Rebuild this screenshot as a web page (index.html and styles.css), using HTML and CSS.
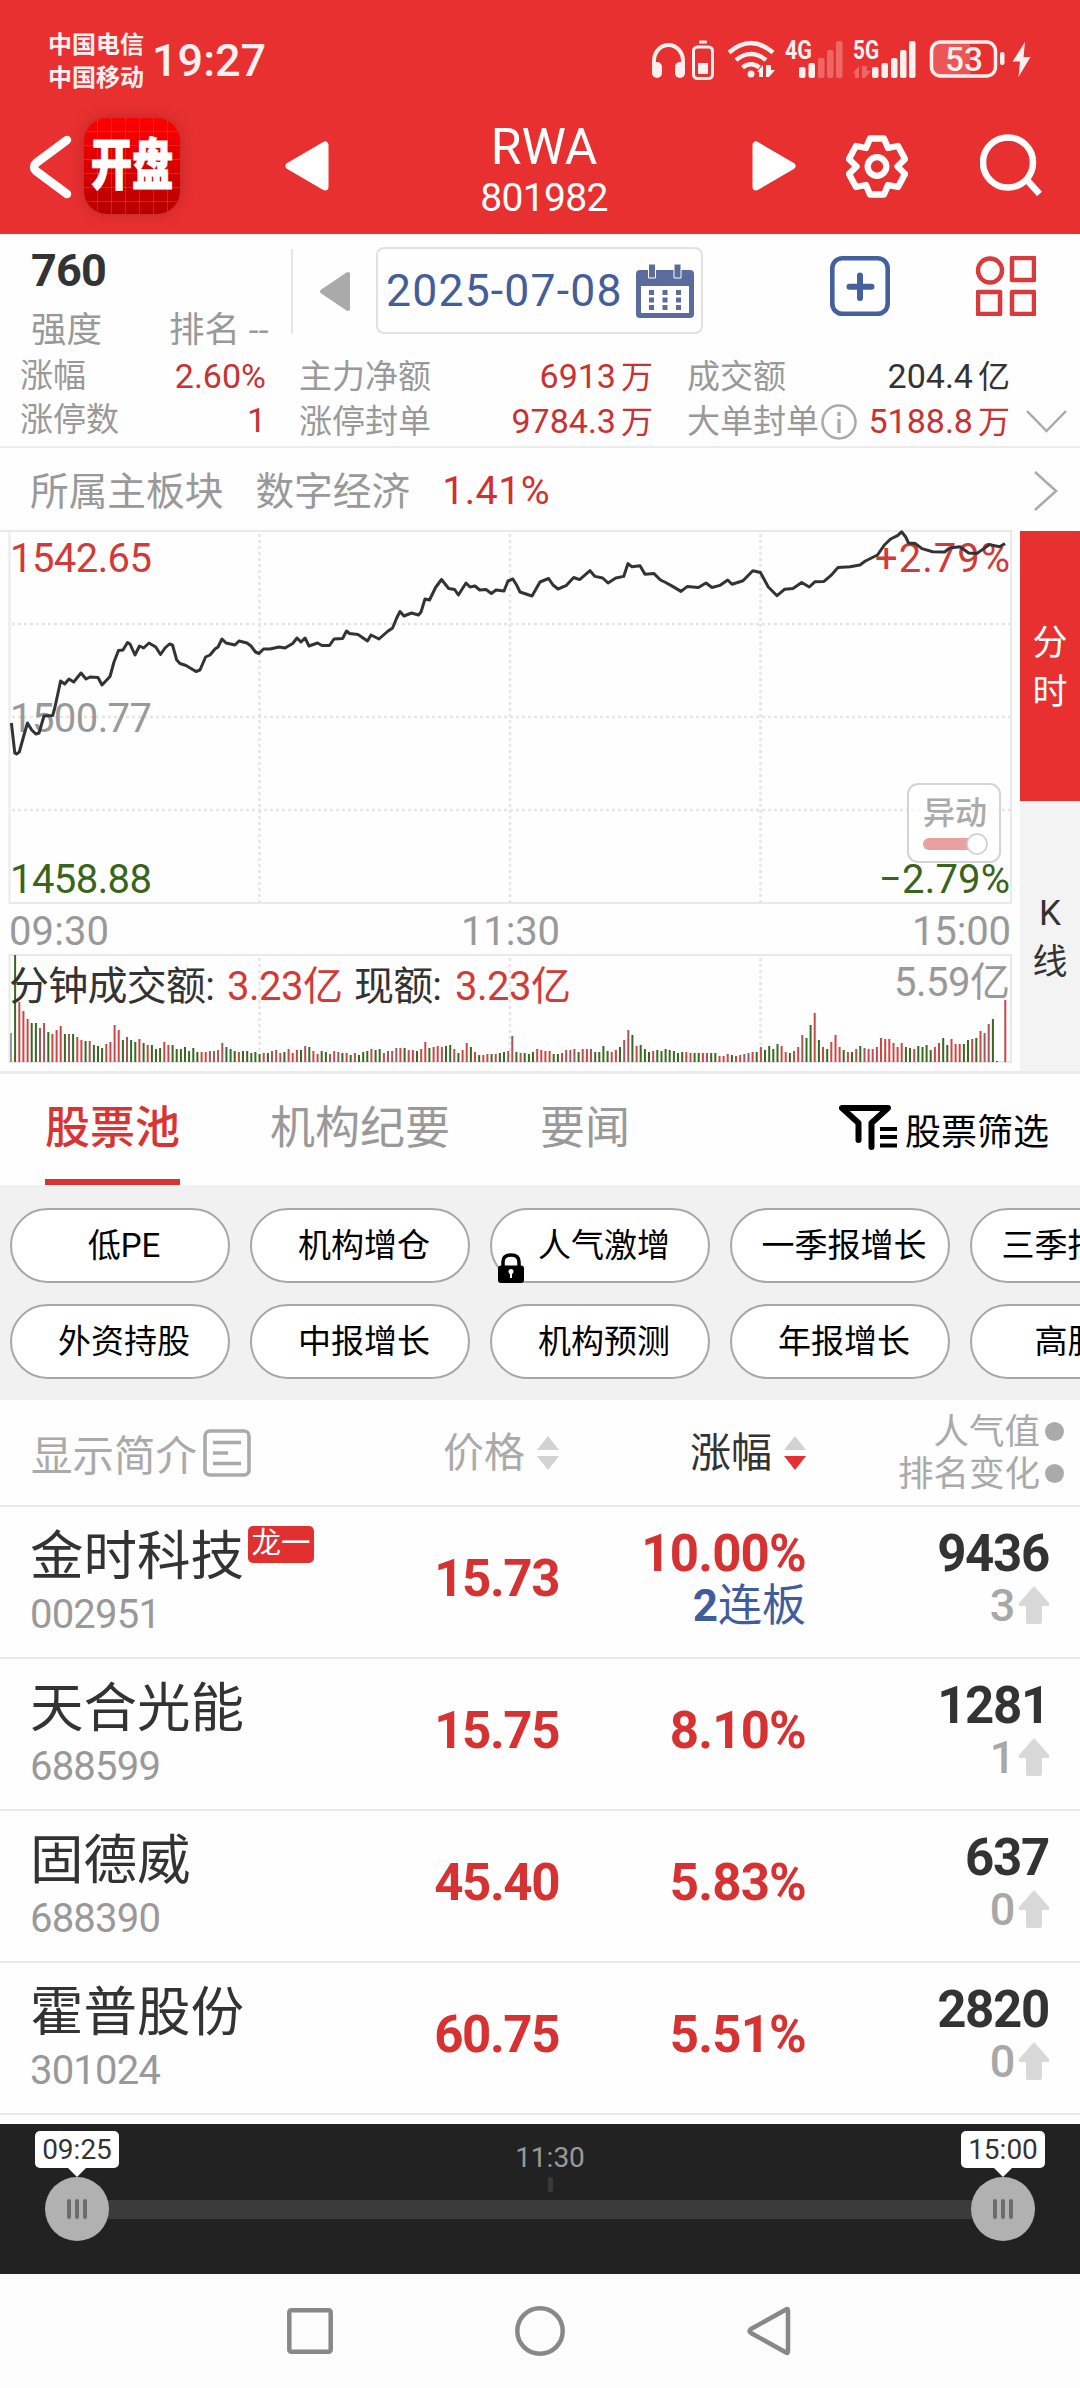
FILE: index.html
```html
<!DOCTYPE html>
<html lang="zh-CN">
<head>
    <meta charset="UTF-8">
    <meta name="viewport" content="width=device-width, initial-scale=1.0">
    <title>RWA 801982</title>
    <link rel="stylesheet" href="styles.css">
</head>
<body>

    <header class="header">
        <div class="status-bar">
            <div class="carrier">
                <span>中国电信</span>
                <span>中国移动</span>
            </div>
            <span class="clock">19:27</span>
            <svg class="status-icons" width="390" height="44" viewBox="0 0 390 44">
                <!-- headphones -->
                <path d="M4 28V23a14.500 16 0 0 1 29 0v5" fill="none" stroke="#fff0f0" stroke-width="4"/>
                <rect x="2" y="24" width="10" height="16" rx="5"/>
                <rect x="25" y="24" width="10" height="16" rx="5"/>
                <rect x="49" y="2.500" width="8" height="3" rx="1"/>
                <rect x="43.500" y="9" width="19" height="31.500" rx="4" fill="none" stroke="#fff0f0" stroke-width="3"/>
                <rect x="48" y="25" width="10" height="11"/>
                <!-- wifi -->
                <g fill="none" stroke="#fff0f0" stroke-width="4.500">
                    <path d="M79 14.500q22-19 44 0"/>
                    <path d="M86 22q15-12 30 0"/>
                    <path d="M92.500 29.500q8.500-6.500 17 0"/>
                </g>
                <circle cx="101" cy="36" r="3.500"/>
                <path d="M107 34l6-7v12h-4v-5zM116 27v12h3l6-7h-4v-5z"/>
                <!-- signals -->
                <text x="135" y="21" class="net" textLength="27" lengthAdjust="spacingAndGlyphs">4G</text>
                <rect x="149" y="29" width="6.500" height="11" rx="2"/>
                <rect x="158.500" y="25" width="6.500" height="15" rx="2"/>
                <g opacity=".28">
                    <rect x="168" y="20" width="6.500" height="20" rx="2"/>
                    <rect x="177" y="12" width="6.500" height="28" rx="2"/>
                    <rect x="186" y="3" width="6.500" height="37" rx="2"/>
                    <path d="M203 35l6-7v12h-4v-5zM212 28v12h3l6-7h-4v-5z"/>
                </g>
                <text x="203" y="21" class="net" textLength="26" lengthAdjust="spacingAndGlyphs">5G</text>
                <rect x="222" y="29" width="6.500" height="11" rx="2"/>
                <rect x="231.500" y="25" width="6.500" height="15" rx="2"/>
                <rect x="241" y="20" width="6.500" height="20" rx="2"/>
                <rect x="250" y="12" width="6.500" height="28" rx="2"/>
                <rect x="259" y="3" width="6.500" height="37" rx="2"/>
                <!-- battery -->
                <path d="M290 4h30v34h-30q-8 0-8-8v-18q0-8 8-8z" opacity=".2"/>
                <rect x="281.500" y="4" width="64" height="34" rx="9" fill="none" stroke="#fff0f0" stroke-width="3.500"/>
                <rect x="350" y="14" width="4.500" height="13" rx="2"/>
                <text x="295" y="33" class="level" textLength="38" lengthAdjust="spacingAndGlyphs">53</text>
                <path d="M375 4l-12.500 19.500h7.500l-1.500 15.500 12-20h-7z"/>
            </svg>
        </div>

        <div class="nav">
            <svg class="back" width="44" height="66" viewBox="0 0 44 66"><path d="M38 6L7 29q-4 4 0 8L38 60" fill="none" stroke="#fff" stroke-width="8.500" stroke-linecap="round"/></svg>
            <div class="logo"><span>开盘</span></div>
            <svg class="prev" width="44" height="50" viewBox="0 0 44 50"><path d="M40 4v42L4 25z" fill="#fff" stroke="#fff" stroke-width="7" stroke-linejoin="round"/></svg>
            <div class="title">
                <h1>RWA</h1>
                <p>801982</p>
            </div>
            <svg class="next" width="44" height="50" viewBox="0 0 44 50"><path d="M4 4v42l36-21z" fill="#fff" stroke="#fff" stroke-width="7" stroke-linejoin="round"/></svg>
            <svg class="gear" width="62" height="63" viewBox="0 0 62 63" fill="none" stroke="#fff" stroke-width="6.300" stroke-linejoin="round">
                <path d="M24 3.500h14l4 9.500 10-2 7 13-7.500 7.500L59 39l-7 13-10-2-4 9.500H24L20 50l-10 2-7-13 7.500-7.500L3 24l7-13 10 2z"/>
                <circle cx="31" cy="31.500" r="9.300"/>
            </svg>
            <svg class="search" width="62" height="62" viewBox="0 0 62 62" fill="none" stroke="#fff" stroke-width="6.500">
                <circle cx="28" cy="28.500" r="25"/>
                <path d="M47 46l12.500 14"/>
            </svg>
        </div>
    </header>

    <section class="summary">
        <div class="strength">
            <b>760</b>
            <p><span>强度</span><span>排名 --</span></p>
        </div>
        <svg class="day-prev" width="31" height="41" viewBox="0 0 31 41"><path d="M29 3v35L3 20.500z" fill="#aaa" stroke="#aaa" stroke-width="4" stroke-linejoin="round"/></svg>
        <div class="date">
            <span>2025-07-08</span>
            <svg width="58" height="55" viewBox="0 0 58 55" fill="#5a6c9c">
                <path fill-rule="evenodd" d="M4 6h50q4 0 4 4v40q0 4-4 4H4q-4 0-4-4V10q0-4 4-4zM5 22v27h48V22z"/>
                <path d="M12.500 0h7v14h-7zM38 0h7v14h-7z" stroke="#fff" stroke-width="1"/>
                <path d="M13 26h5v5h-5zM26.500 26h5v5h-5zM40 26h5v5h-5zM13 33.500h5v5h-5zM26.500 33.500h5v5h-5zM40 33.500h5v5h-5zM13 41h5v5h-5zM26.500 41h5v5h-5zM40 41h5v5h-5z"/>
            </svg>
        </div>
        <svg class="add" width="60" height="60" viewBox="0 0 60 60" fill="none" stroke="#44619d">
            <rect x="2.300" y="2.300" width="55.400" height="55.400" rx="10" stroke-width="4.600"/>
            <path d="M30 19.500v22.500M19.500 30.700h22" stroke-width="6" stroke-linecap="round"/>
        </svg>
        <svg class="apps" width="60" height="60" viewBox="0 0 60 60" fill="none" stroke="#d73b3b" stroke-width="4.500" stroke-linejoin="round">
            <circle cx="14" cy="14.500" r="12"/>
            <rect x="36" y="2" width="22" height="22"/>
            <rect x="2" y="36" width="22" height="22"/>
            <rect x="36" y="36" width="22" height="22"/>
        </svg>
    </section>

    <section class="stats">
        <dl class="stats-a">
            <div><dt>涨幅</dt><dd>2.60%</dd></div>
            <div><dt>涨停数</dt><dd>1</dd></div>
        </dl>
        <dl class="stats-b">
            <div><dt>主力净额</dt><dd>6913<i>万</i></dd></div>
            <div><dt>涨停封单</dt><dd>9784.3<i>万</i></dd></div>
        </dl>
        <dl class="stats-c">
            <div><dt>成交额</dt><dd class="dark">204.4<i>亿</i></dd></div>
            <div>
                <dt>大单封单<svg width="38" height="38" viewBox="0 0 38 38" fill="none" stroke="#aaa" stroke-width="2.500"><circle cx="19" cy="19" r="16.500"/><path d="M19 16v14M19 9v4" stroke-width="3.300"/></svg></dt>
                <dd>5188.8<i>万</i></dd>
            </div>
        </dl>
        <svg class="more" width="41" height="24" viewBox="0 0 41 24"><path d="M1 1l19.500 20L40 1" fill="none" stroke="#aaa" stroke-width="2.500"/></svg>
    </section>

    <section class="board">
        <span>所属主板块</span>
        <span>数字经济</span>
        <em>1.41%</em>
        <svg width="24" height="40" viewBox="0 0 24 40"><path d="M1 1l21 19L1 39" fill="none" stroke="#aaa" stroke-width="2.500"/></svg>
    </section>

    <section class="chart">
        <div class="plot">
            <svg width="1020" height="541" viewBox="0 0 1020 541">
                <g class="frame">
                    <path d="M0 0H1011"/>
                    <rect x="9.500" y="0" width="1001.500" height="372"/>
                    <rect x="9.500" y="424" width="1001.500" height="107"/>
                </g>
                <g class="grid">
                    <path d="M12 93H1011M12 186H1011M12 279H1011"/>
                    <path d="M259.500 3V372M510 3V372M760.500 3V372M259.500 427V531M510 427V531M760.500 427V531"/>
                </g>
                <g class="labels">
                    <text x="10" y="41" class="up" textLength="142">1542.65</text>
                    <text x="10" y="201" class="mid" textLength="142">1500.77</text>
                    <text x="10" y="362" class="down" textLength="142">1458.88</text>
                    <text x="875" y="41" class="up" textLength="135">+2.79%</text>
                    <text x="879" y="362" class="down" textLength="131">−2.79%</text>
                    <text x="9" y="414" class="mid" textLength="100">09:30</text>
                    <text x="461" y="414" class="mid" textLength="99">11:30</text>
                    <text x="912" y="414" class="mid" textLength="99">15:00</text>
                    <text x="894" y="465" class="mid" textLength="116">5.59亿</text>
                </g>
                <g id="volume"></g>
                <g class="labels">
                    <text x="9" y="469" class="dark" textLength="206">分钟成交额:</text>
                    <text x="227" y="469" class="up" textLength="116">3.23亿</text>
                    <text x="354" y="469" class="dark" textLength="88">现额:</text>
                    <text x="455" y="469" class="up" textLength="116">3.23亿</text>
                </g>
                <polyline id="price" points=""/>
            </svg>
            <div class="switch">
                异动
                <svg width="66" height="22" viewBox="0 0 66 22">
                    <rect x="0" y="5" width="58" height="12" rx="6" fill="#e9a0a0"/>
                    <circle cx="54" cy="11" r="10" fill="#fff" stroke="#ccc" stroke-width="1.500"/>
                </svg>
            </div>
        </div>
        <div class="modes">
            <div class="mode active"><span>分</span><span>时</span></div>
            <div class="mode"><span>K</span><span>线</span></div>
        </div>
    </section>

    <nav class="tabs">
        <a class="tab active">股票池</a>
        <a class="tab">机构纪要</a>
        <a class="tab">要闻</a>
        <a class="screener">
            <svg width="58" height="46" viewBox="0 0 58 46" fill="none" stroke="#000">
                <path d="M19.500 35V18L3 3h46L32.500 18v24" stroke-width="6" stroke-linecap="round" stroke-linejoin="round"/>
                <path d="M41 24h17M41 32h17M41 40.500h17" stroke-width="4"/>
            </svg>
            股票筛选
        </a>
    </nav>

    <section class="filters">
        <span class="pill">低PE</span>
        <span class="pill">机构增仓</span>
        <span class="pill">人气激增
            <svg class="lock" width="26" height="30" viewBox="0 0 26 30">
                <path d="M5 14V9q0-7 8-7t8 7v5" fill="none" stroke="#000" stroke-width="3.500"/>
                <rect y="12.500" width="26" height="17.500" rx="3"/>
                <path d="M13 17v8" stroke="#fff" stroke-width="2"/>
                <circle cx="13" cy="18.500" r="2.500" fill="#fff"/>
            </svg>
        </span>
        <span class="pill">一季报增长</span>
        <span class="pill">三季报增长</span>
        <span class="pill">外资持股</span>
        <span class="pill">中报增长</span>
        <span class="pill">机构预测</span>
        <span class="pill">年报增长</span>
        <span class="pill">高股息</span>
    </section>

    <section class="stocks">
        <div class="row head">
            <div class="intro">显示简介
                <svg width="48" height="48" viewBox="0 0 48 48" fill="none" stroke="#aaa">
                    <rect x="2" y="2" width="44" height="44" rx="5" stroke-width="3.600"/>
                    <path d="M10 13.500h28M10 24h15M10 34.500h28" stroke-width="3.400"/>
                </svg>
            </div>
            <div class="price">价格<svg width="22" height="34" viewBox="0 0 22 34" fill="#d2d2d2"><path d="M11 0l11 14H0zM0 20h22L11 34z"/></svg></div>
            <div class="change">涨幅<svg width="22" height="34" viewBox="0 0 22 34"><path d="M11 0l11 14H0z" fill="#d2d2d2"/><path d="M0 20h22L11 34z" fill="#e83030"/></svg></div>
            <div class="hot">
                <p>人气值<i></i></p>
                <p>排名变化<i></i></p>
            </div>
        </div>
        <div class="row">
            <div class="name"><h2>金时科技<sup>龙一</sup></h2><p>002951</p></div>
            <div class="price">15.73</div>
            <div class="change">10.00%<small><b>2</b>连板</small></div>
            <div class="hot">9436<small>3<svg width="30" height="38" viewBox="0 0 30 38"><path d="M15 0l15 17v3h-7v16q0 2-2 2H9q-2 0-2-2V20H0v-3z"/></svg></small></div>
        </div>
        <div class="row">
            <div class="name"><h2>天合光能</h2><p>688599</p></div>
            <div class="price">15.75</div>
            <div class="change">8.10%</div>
            <div class="hot">1281<small>1<svg width="30" height="38" viewBox="0 0 30 38"><path d="M15 0l15 17v3h-7v16q0 2-2 2H9q-2 0-2-2V20H0v-3z"/></svg></small></div>
        </div>
        <div class="row">
            <div class="name"><h2>固德威</h2><p>688390</p></div>
            <div class="price">45.40</div>
            <div class="change">5.83%</div>
            <div class="hot">637<small>0<svg width="30" height="38" viewBox="0 0 30 38"><path d="M15 0l15 17v3h-7v16q0 2-2 2H9q-2 0-2-2V20H0v-3z"/></svg></small></div>
        </div>
        <div class="row">
            <div class="name"><h2>霍普股份</h2><p>301024</p></div>
            <div class="price">60.75</div>
            <div class="change">5.51%</div>
            <div class="hot">2820<small>0<svg width="30" height="38" viewBox="0 0 30 38"><path d="M15 0l15 17v3h-7v16q0 2-2 2H9q-2 0-2-2V20H0v-3z"/></svg></small></div>
        </div>
    </section>

    <section class="timeline">
        <div class="handle">
            <span class="tip">09:25</span>
            <span class="knob"><i></i><i></i><i></i></span>
        </div>
        <div class="track">
            <span class="noon">11:30</span>
            <span class="tick"></span>
            <span class="bar"></span>
        </div>
        <div class="handle">
            <span class="tip">15:00</span>
            <span class="knob"><i></i><i></i><i></i></span>
        </div>
    </section>

    <footer class="system-nav">
        <svg width="46" height="46" viewBox="0 0 46 46"><rect x="2.300" y="2.300" width="41.400" height="41.400" rx="2"/></svg>
        <svg width="50" height="50" viewBox="0 0 50 50"><circle cx="25" cy="25" r="22.700"/></svg>
        <svg width="44" height="50" viewBox="0 0 44 50"><path d="M39 3.500Q41 2 41 5v40q0 3-2 1.500L4 27q-3-2 0-4z"/></svg>
    </footer>

    <script src="script.js"></script>
</body>
</html>
```

FILE: styles.css
```css
* {
    box-sizing: border-box;
}

body {
    margin: 0;
    width: 1080px;
    height: 2388px;
    overflow: hidden;
    background-color: #fefefe;
    color: #333;
    font-family: Roboto, "Noto Sans CJK SC", sans-serif;
}

h1, h2, p, dl, dd {
    margin: 0;
    font-weight: 400;
}

i, em {
    font-style: normal;
}

svg {
    display: block;
    flex: none;
}

/* header */
.header {
    height: 234px;
    background-color: #e83030;
    color: #fff;
}

.status-bar {
    display: flex;
    height: 100px;
    padding: 29px 0 0 48px;
    color: #fff0f0;
}

.carrier {
    display: flex;
    flex-direction: column;
    width: 104px;
    font-size: 24px;
    font-weight: 700;
    line-height: 33px;
}

.clock {
    width: 448px;
    font-size: 45px;
    font-weight: 500;
    line-height: 63px;
}

.status-icons {
    margin: 9px 0 0 50px;
    overflow: visible;
    fill: #fff0f0;
}

.net {
    font-size: 26px;
    font-weight: 700;
}

.level {
    font-size: 34px;
    font-weight: 500;
}

.nav {
    display: flex;
    align-items: flex-start;
    height: 134px;
}

.back {
    margin: 34px 11px 0 29px;
}

.logo {
    width: 96px;
    height: 96px;
    margin-top: 18px;
    border-radius: 23px;
    background-image:
        repeating-linear-gradient(90deg, transparent 0 13px, rgba(255, 90, 90, 0.35) 13px 14px),
        repeating-linear-gradient(transparent 0 13px, rgba(255, 90, 90, 0.35) 13px 14px),
        linear-gradient(#ff0000, #b60000);
    box-shadow: 0 0 14px rgba(120, 30, 30, 0.4);
    display: flex;
    align-items: center;
    justify-content: center;
}

.logo span {
    font-size: 51px;
    font-weight: 900;
    line-height: 96px;
    white-space: nowrap;
    -webkit-text-stroke: 1px #fff;
    transform: scale(0.81, 1.08);
}

.prev {
    margin: 41px 0 0 105px;
}

.title {
    width: 423px;
    padding: 17px 0 0 7px;
    text-align: center;
}

.title h1 {
    font-size: 50px;
    line-height: 60px;
}

.title p {
    font-size: 39px;
    line-height: 42px;
    letter-spacing: -0.700px;
}

.next {
    margin-top: 41px;
}

.gear {
    margin: 35px 0 0 50px;
}

.search {
    margin: 34px 0 0 72px;
}

/* summary */
.summary {
    display: flex;
    align-items: flex-start;
    height: 123px;
    padding: 13px 0 0 31px;
}

.strength {
    width: 262px;
    height: 85px;
    margin-top: 2px;
    border-right: 2px solid #e6e6e6;
}

.strength b {
    display: block;
    height: 57px;
    font-size: 45px;
    line-height: 43px;
    letter-spacing: -0.800px;
}

.strength p {
    display: flex;
    gap: 67px;
    font-size: 35.500px;
    line-height: 48px;
    color: #999;
}

.day-prev {
    margin: 24px 0 0 26px;
}

.date {
    display: flex;
    justify-content: space-between;
    align-items: center;
    width: 327px;
    height: 87px;
    margin-left: 26px;
    padding: 1px 7px 0 8px;
    border: 2px solid #e1e1e1;
    border-radius: 8px;
    color: #435e98;
    font-size: 44.500px;
    letter-spacing: 1.200px;
}

.add {
    margin: 9px 0 0 127px;
}

.apps {
    margin: 9px 0 0 86px;
}

.stats {
    display: flex;
    height: 91px;
    padding-left: 20px;
    border-bottom: 2px solid #ececec;
    font-size: 33px;
    line-height: 44px;
}

.stats dl {
    margin-top: -3px;
}

.stats .stats-a {
    width: 246px;
}

.stats .stats-b {
    width: 354px;
    margin-left: 33px;
}

.stats .stats-c {
    width: 323px;
    margin-left: 34px;
}

.stats dl div {
    display: flex;
    justify-content: space-between;
    white-space: nowrap;
}

.stats dt {
    display: flex;
    align-items: center;
    gap: 1px;
    color: #999;
}

.stats dd {
    font-size: 34px;
    color: #c93232;
}

.stats dd i {
    margin-left: 5px;
    font-size: 32px;
}

.stats dd.dark {
    color: #333;
}

.more {
    margin: 53px 0 0 16px;
}

.board {
    display: flex;
    align-items: center;
    height: 83px;
    padding: 2px 22px 0 30px;
    font-size: 38.700px;
    color: #999;
}

.board span {
    margin: -5px 32px 0 0;
}

.board em {
    flex: 1;
    font-size: 39.500px;
    letter-spacing: 0.400px;
    color: #d03030;
}

/* chart */
.chart {
    display: flex;
    height: 543px;
    border-bottom: 3px solid #ebebeb;
}

.plot {
    position: relative;
    width: 1020px;
}

.plot > svg {
    overflow: visible;
}

.frame {
    fill: none;
    stroke: #e9e9e9;
    stroke-width: 2;
}

.grid {
    fill: none;
    stroke: #e6e6e6;
    stroke-width: 2.500;
    stroke-dasharray: 3 3;
}

.labels {
    font-size: 40px;
}

.labels .up {
    fill: #d23a3a;
}

.labels .down {
    fill: #38641c;
}

.labels .mid {
    fill: #999;
}

.labels .dark {
    fill: #333;
}

#price {
    fill: none;
    stroke: #333;
    stroke-width: 3;
    stroke-linejoin: round;
}

.switch {
    position: absolute;
    left: 907px;
    top: 252px;
    width: 94px;
    height: 80px;
    padding: 8px 0 0 14px;
    border: 2px solid #d4d4d4;
    border-radius: 11px;
    background-color: rgba(255, 255, 255, 0.7);
    color: #aaa;
    font-size: 32px;
    font-weight: 500;
    line-height: 40px;
}

.modes {
    width: 60px;
}

.mode {
    display: flex;
    flex-direction: column;
    align-items: center;
    justify-content: center;
    height: 270px;
    padding-top: 3px;
    background-color: #f3f3f3;
    font-size: 35px;
    line-height: 49px;
}

.mode.active {
    background-color: #e83030;
    color: #fff;
}

/* tabs */
.tabs {
    display: flex;
    height: 111px;
    padding-left: 45px;
    font-size: 45px;
    color: #999;
}

.tab {
    height: 111px;
    margin-right: 90px;
    line-height: 109px;
}

.tab.active {
    color: #d83434;
    font-weight: 500;
    border-bottom: 6px solid #d83434;
}

.screener {
    display: flex;
    align-items: center;
    gap: 8px;
    margin: -2px 0 0 119px;
    font-size: 36px;
    color: #000;
}

.screener svg {
    margin-top: -2px;
}

.filters {
    display: grid;
    grid-template-columns: repeat(5, 220px);
    grid-auto-rows: 75px;
    gap: 21px 20px;
    height: 215px;
    padding: 23px 0 0 10px;
    overflow: hidden;
    background-color: #f1f1f1;
    color: #000;
}

.pill {
    position: relative;
    border: 2px solid #a8a8a8;
    border-radius: 38px;
    padding-left: 8px;
    background-color: #fff;
    font-size: 33px;
    line-height: 71px;
    text-align: center;
}

.lock {
    position: absolute;
    left: 6px;
    bottom: -2px;
}

/* stock list */
.row {
    display: grid;
    grid-template-columns: 340px 219px 247px 1fr;
    height: 152px;
    padding-right: 31px;
    border-bottom: 2px solid #e9e9e9;
    text-align: right;
}

.row.head {
    height: 107px;
    align-items: center;
    padding-right: 16px;
    font-size: 41.500px;
    color: #aaa;
}

.head .intro {
    display: flex;
    align-items: center;
    gap: 6px;
    padding: 1px 0 0 31px;
}

.head .price,
.head .change {
    display: flex;
    align-items: center;
    justify-content: flex-end;
    gap: 12px;
    padding: 0;
    color: #aaa;
    font-size: 41px;
    font-weight: 400;
    letter-spacing: 0;
    line-height: 60px;
}

.head .change {
    color: #333;
}

.head .hot {
    padding: 0;
    font-size: 35.500px;
    font-weight: 400;
    letter-spacing: 0;
    line-height: 42px;
    color: #aaa;
}

.head .hot p {
    display: flex;
    align-items: center;
    justify-content: flex-end;
    gap: 5px;
}

.head .hot i {
    width: 19px;
    height: 19px;
    border-radius: 50%;
    background-color: #aaa;
}

.name {
    padding: 17px 0 0 30px;
    text-align: left;
    white-space: nowrap;
}

.name h2 {
    display: flex;
    font-size: 53.500px;
    line-height: 66px;
}

.name sup {
    width: 66px;
    height: 37px;
    margin: 2px 0 0 4px;
    border-radius: 5px;
    background-color: #e03030;
    color: #fff;
    font-size: 29.500px;
    line-height: 35px;
    text-align: center;
}

.name p {
    font-size: 40px;
    line-height: 50px;
    letter-spacing: -0.800px;
    color: #999;
}

.price,
.change {
    font-size: 51px;
    font-weight: 700;
    letter-spacing: -1.400px;
    line-height: 144px;
    color: #d63232;
}

.change {
    letter-spacing: -0.800px;
}

.change:has(small),
.hot {
    padding-top: 21px;
    line-height: 52px;
}

.change small {
    display: block;
    font-size: 44px;
    font-weight: 400;
    letter-spacing: 0;
    line-height: 52px;
    color: #415c9c;
}

.hot {
    font-size: 51px;
    font-weight: 700;
    letter-spacing: -1.300px;
}

.hot small {
    display: flex;
    align-items: center;
    justify-content: flex-end;
    gap: 5px;
    font-size: 45px;
    font-weight: 500;
    color: #a8a8a8;
}

.hot small svg {
    margin-top: -2px;
    fill: #d8d8d8;
}

/* replay timeline */
.timeline {
    display: flex;
    justify-content: space-between;
    height: 150px;
    margin-top: 9px;
    padding: 7px 35px 0;
    background-color: #222;
}

.handle {
    display: flex;
    flex-direction: column;
    align-items: center;
    width: 84px;
    z-index: 1;
}

.tip {
    position: relative;
    width: 84px;
    height: 37px;
    margin-bottom: 9px;
    border-radius: 5px;
    background-color: #fff;
    font-size: 28px;
    line-height: 38px;
    text-align: center;
}

.tip::after {
    content: "";
    position: absolute;
    left: 33px;
    top: 37px;
    border: 9px solid transparent;
    border-top-color: #fff;
    border-bottom: 0;
}

.knob {
    display: flex;
    align-items: center;
    justify-content: center;
    gap: 4px;
    width: 64px;
    height: 64px;
    border-radius: 50%;
    background-color: #b1b1b1;
}

.knob i {
    width: 4px;
    height: 20px;
    border-radius: 2px;
    background-color: #6c6c6c;
}

.track {
    display: flex;
    flex: 1;
    flex-direction: column;
    align-items: center;
    margin: 0 -20px;
    padding: 10px 0 0 20px;
}

.noon {
    font-size: 28px;
    line-height: 34px;
    color: #999;
}

.tick {
    width: 5px;
    height: 15px;
    margin: 2px 0 8px;
    border-radius: 2px;
    background-color: #3b3b3b;
}

.bar {
    align-self: stretch;
    height: 19px;
    margin-left: -20px;
    background-color: #3b3b3b;
}

.system-nav {
    display: flex;
    align-items: center;
    justify-content: center;
    gap: 182px;
    height: 114px;
    padding-right: 3px;
    background-color: #fcfcfc;
}

.system-nav svg {
    fill: none;
    stroke: #888;
    stroke-width: 4.500;
}
```

FILE: script.js
```js
// minute price line, x,y in chart pixels
var price = "11.4,192 14.8,222 16.5,223 19.3,221 24,204 27.5,192 31.7,199 35.8,203 39,202 44,185 52.7,184.5 55,176 60.6,150 64.7,153 69,148 73.7,151 81,142 86,148 90,146 98,146.5 102,154 110,145.5 114,131 118.5,119.5 123,119 127.5,111.5 130,113 135,124 139.5,115 143.6,117 149,112 155.7,116 160.5,123.5 165,117 169.5,113 172.5,114 176.7,129 180,132.5 186,134.5 196,140.5 200,139 205.6,126 210,124 215,118 218,116 222,108 226,112 235,114 239,110 247,112 251,115 255.5,121 259,122.5 263.5,118 270,118 279,116 285,117 292.7,112.5 297,107 301,111 305,107 309,115 317.5,112 322,114.5 329.5,114.5 334,108 342.6,107.5 346.5,100 349.5,102.5 358,103.5 367.5,110 371,104 379,108 387.5,100.5 392.6,97 396.7,87 400,80.5 404,85 411.5,82 418.5,84 421,81 425,68 429.5,69 435.6,56.5 441.5,48.5 448.7,57.5 454.6,58.5 458.4,64 466,52 470,56 475,55 479.7,59 486,58.5 491.4,62.5 496,59 504,60 508,50 512.8,48 516.6,54 520,61 532,65 540,51 548.6,47.5 553,54 558,58 566,54.7 573.7,46.5 579.6,48.6 590,39.7 595,45.4 602.7,47 608,52 615.8,47 623.7,45.4 628,32.6 632,35.8 640,34.7 645,43.3 654,42.6 660.5,49 665.7,51.5 672.6,55.4 681,60.4 687.4,55.4 698.4,56.5 706,52 712,56.5 719.8,54.4 727.7,49 732,53.3 743,49.7 752.8,39.7 760.4,41.5 768.3,56 777,64.7 784.5,58.3 793,57.6 801.7,51.5 809.3,56 814.8,50.8 824,50.4 831,44.4 838,36.5 850,35.8 860,34 865.4,30 877.5,24 884.4,14 890.6,8 897.5,4.7 901.6,0.8 905.7,6 908.5,12 915.4,12.6 922,17.6 932.6,20.8 944.6,21 949.8,17 960,15.8 968.7,22 976.7,22.6 989.4,13.6 999.7,15.8 1005,12.6";

// minute volume: height + direction (r up, g down, m mixed, x auction)
var volume = "29x 107g 60r 51r 43r 39g 39g 34m 39m 30g 28r 32r 36r 28g 28m 28g 25r 22r 21g 21m 17g 16g 14g 18r 20r 37r 32r 22g 25m 22g 20g 23r 19g 17r 17g 13g 14g 20r 17r 17g 13g 13g 15g 11g 14g 10g 10r 10r 11m 11m 12m 19m 15g 13g 11g 10r 11g 11g 9g 10g 8g 9r 9g 11m 12m 9r 10g 13r 9r 12r 12g 16m 15g 11r 8r 11g 10g 8r 11m 10m 9g 9r 7g 9r 7g 10g 11g 13r 12g 13g 9r 11m 11m 14m 14r 14g 12r 12r 11g 13r 20r 14g 15r 16r 15r 16g 17g 13m 9g 12r 19r 15g 10r 7g 7r 8r 8g 8r 9g 10g 11m 26m 10g 9r 9g 8g 10g 13r " +
    "12r 11r 11r 8g 8g 9r 12m 12m 13m 10g 13r 13r 13r 10g 10g 16g 11g 10r 12r 15g 22m 32m 27g 16r 17g 13g 10g 11r 12g 11g 13g 12g 11g 9g 10g 10r 9r 9g 9g 9r 9r 9g 9g 6r 6r 8r 7g 6r 7m 8m 9m 10r 10g 15r 12g 16g 13g 18g 16r 10r 9g 11r 15r 27m 24g 37g 49r 22g 15r 13g 20r 27r 15r 12g 10r 10g 13r 16g 14m 13r 13m 15r 24r 23r 23r 19r 15r 19r 15g 14g 13r 16g 15g 17g 12g 15r 19r 24g 17g 23r 18r 18r 18g 22g 23r 24g 31r 29m 38m 43g 1g 0g 62r";

var colors = { r: "#cf4545", g: "#38691f", m: "#a5565c", x: "#999" };

function drawVolume() {
    var html = "";
    volume.split(" ").forEach(function (item, i) {
        var h = parseInt(item);
        var x = 10 + i * 4.143;
        html += '<rect x="' + x.toFixed(1) + '" y="' + (531 - h) + '" width="2" height="' + h + '" fill="' + colors[item.slice(-1)] + '"/>';
    });
    document.getElementById("volume").innerHTML = html;
}

document.getElementById("price").setAttribute("points", price);
drawVolume();
```
